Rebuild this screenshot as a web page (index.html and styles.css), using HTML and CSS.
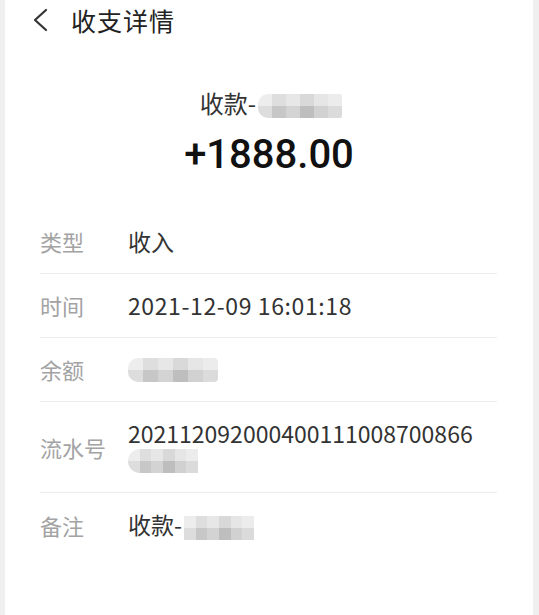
FILE: index.html
```html
<!DOCTYPE html>
<html lang="zh-CN">
<head>
    <meta charset="UTF-8">
    <meta name="viewport" content="width=device-width, initial-scale=1.0">
    <title>收支详情</title>
    <link rel="stylesheet" href="styles.css">
</head>
<body>
    <div class="page">
        <div class="header">
            <svg class="back" width="18" height="24" viewBox="0 0 18 24">
                <path d="M15 2 L4 12 L15 22" fill="none" stroke="#333" stroke-width="2.2" stroke-linecap="round" stroke-linejoin="round"/>
            </svg>
            <span class="title">收支详情</span>
        </div>

        <div class="summary">
            <div class="name">收款-<span class="mask mask-top"></span></div>
            <div class="amount">+1888.00</div>
        </div>

        <div class="list">
            <div class="row">
                <div class="label">类型</div>
                <div class="value">收入</div>
            </div>
            <div class="row">
                <div class="label">时间</div>
                <div class="value time">2021-12-09 16:01:18</div>
            </div>
            <div class="row">
                <div class="label">余额</div>
                <div class="value"><span class="mask mask-balance"></span></div>
            </div>
            <div class="row">
                <div class="label">流水号</div>
                <div class="value">202112092000400111008700866<br><span class="mask mask-serial"></span></div>
            </div>
            <div class="row last">
                <div class="label">备注</div>
                <div class="value">收款-<span class="mask mask-note"></span></div>
            </div>
        </div>
    </div>
</body>
</html>
```

FILE: styles.css
```css
*{
    padding: 0;
    margin: 0;
    box-sizing: border-box;
}
body{
    background-color: #efefef;
    font-family: "Noto Sans CJK SC", "Noto Sans", sans-serif;
    color: #333;
}
.page{
    margin: 0 6px 0 5px;
    background-color: white;
    min-height: 615px;
}
.header{
    display: flex;
    align-items: center;
    height: 40px;
    padding-left: 26px;
}
.back{
    margin-right: 22px;
}
.title{
    font-size: 25px;
    color: #222;
    letter-spacing: 1px;
}
.summary{
    padding-top: 45px;
    text-align: center;
}
.name{
    font-size: 24px;
    line-height: 36px;
    color: #333;
    padding-left: 4px;
}
.amount{
    font-family: Roboto, "Noto Sans", sans-serif;
    font-weight: 500;
    font-size: 40px;
    line-height: 52px;
    color: #111;
    margin-top: 8px;
}
.list{
    padding: 29px 36px 0 35px;
}
.row{
    display: flex;
    align-items: center;
    padding: 18px 0;
    border-bottom: 1px solid #ececec;
    font-size: 22px;
    line-height: 27px;
}
.row.last{
    border-bottom: none;
}
.label{
    width: 88px;
    flex-shrink: 0;
    color: #a3a3a3;
}
.value{
    color: #333;
    font-size: 23px;
}
.time{
    letter-spacing: 0.6px;
}

/* pixelated blur over hidden info */
.mask{
    display: inline-block;
    height: 24px;
    vertical-align: middle;
    filter: blur(0.7px);
    background:
        linear-gradient(180deg, rgba(255,255,255,0.35) 0 50%, rgba(0,0,0,0.03) 50% 100%),
        linear-gradient(90deg, #e4e4e4 0 17%, #cdcdcd 17% 33%, #dadada 33% 50%, #c4c4c4 50% 67%, #d8d8d8 67% 83%, #e2e2e2 83% 100%);
}
.mask-top{
    width: 84px;
    margin-left: 2px;
    border-radius: 10px 2px 2px 10px;
}
.mask-balance{
    width: 90px;
    vertical-align: top;
    margin-top: 2px;
    border-radius: 10px 4px 4px 10px;
}
.mask-serial{
    width: 70px;
    vertical-align: top;
    margin-top: 2px;
    border-radius: 12px 0 0 12px;
}
.mask-note{
    width: 70px;
    margin-left: 2px;
}
```
